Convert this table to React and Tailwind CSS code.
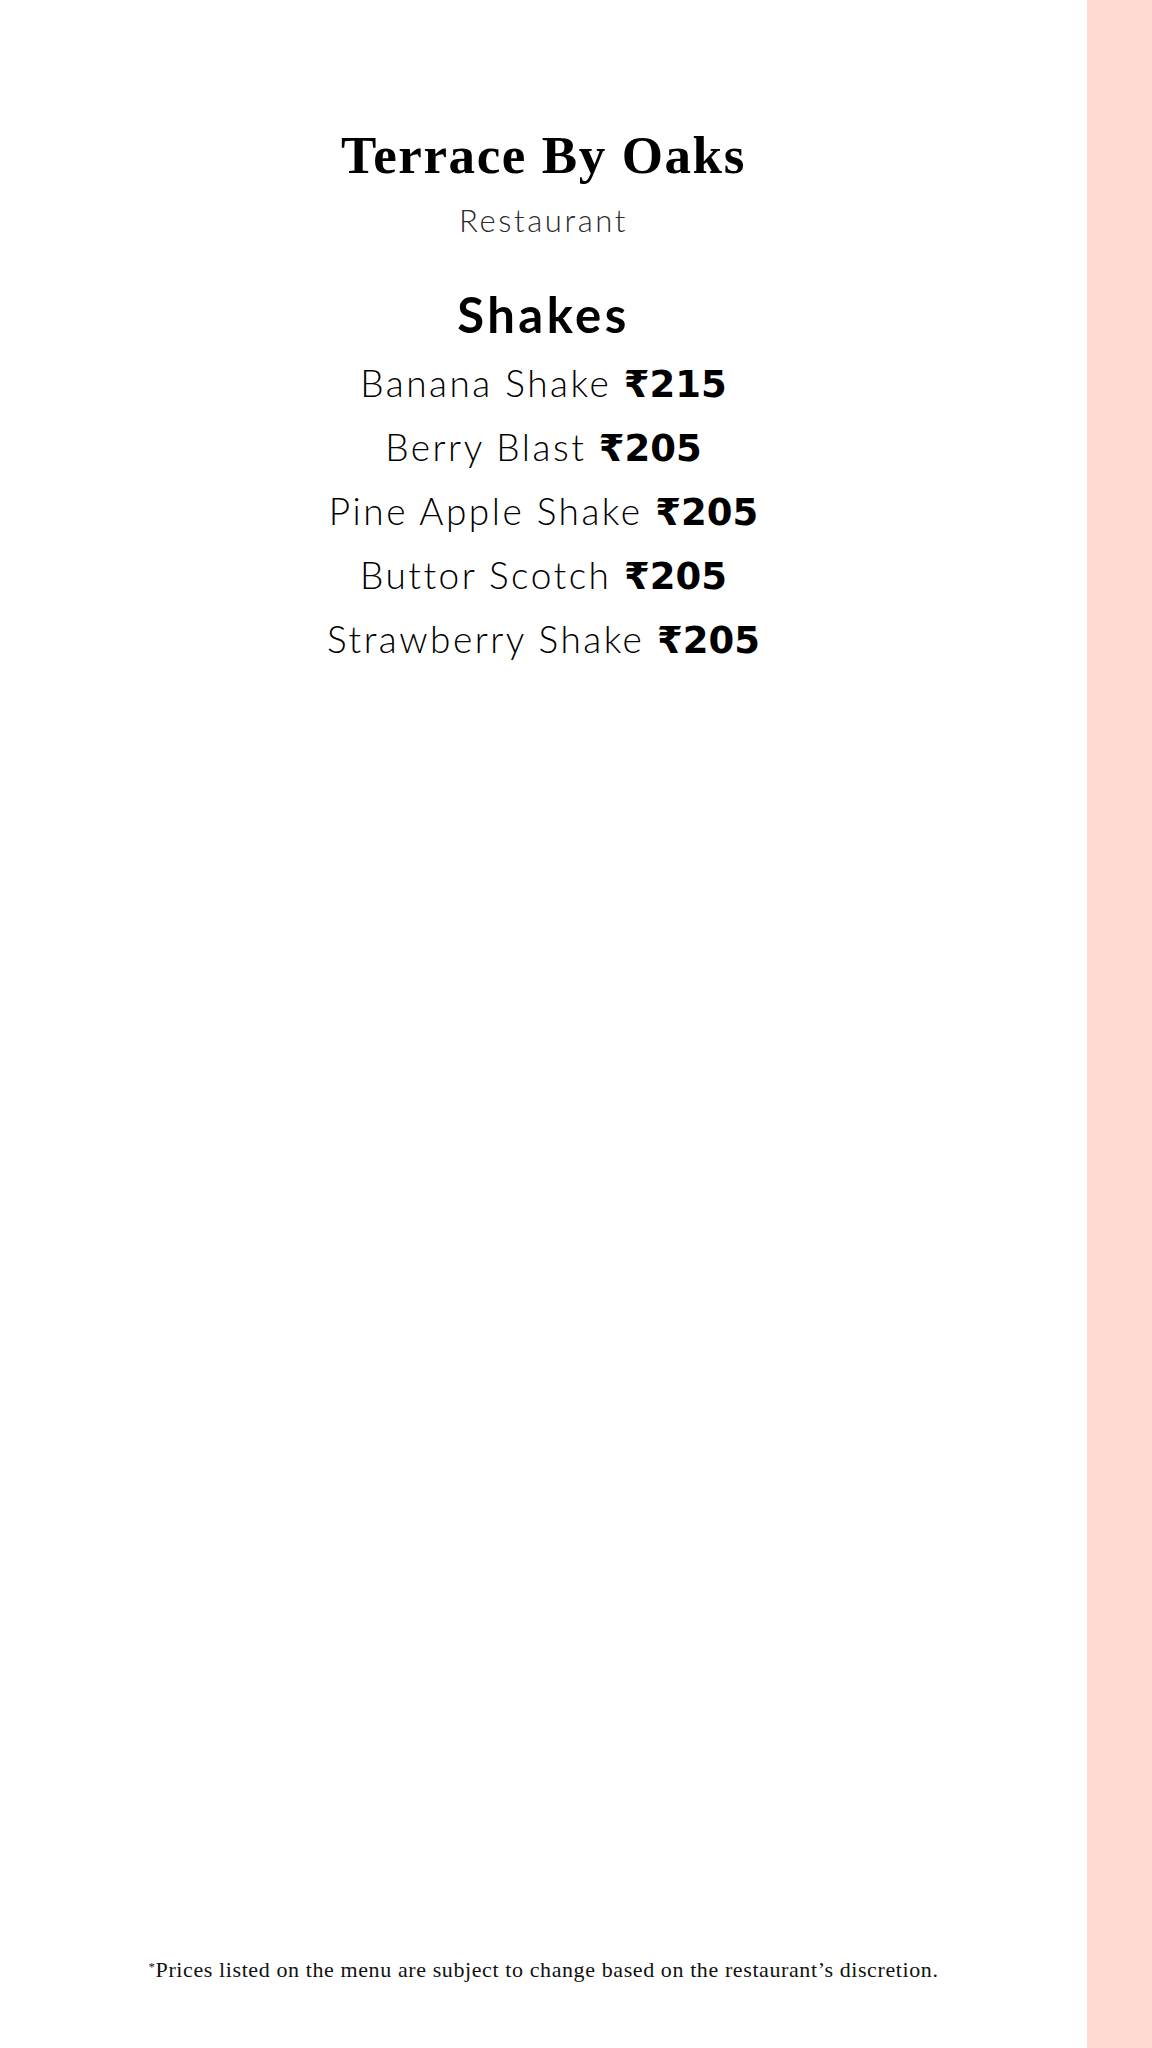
import React from 'react';

const items = [
  { name: 'Banana Shake', price: '215' },
  { name: 'Berry Blast', price: '205' },
  { name: 'Pine Apple Shake', price: '205' },
  { name: 'Buttor Scotch', price: '205' },
  { name: 'Strawberry Shake', price: '205' },
];

export default function App() {
  return (
    <div className="flex min-h-[2048px] w-full bg-white">
      <main className="flex flex-1 flex-col items-center">
        <h1 className="mt-[123px] font-['Liberation_Serif',serif] text-[53px] font-bold leading-[64px] tracking-[1.6px] text-black">
          Terrace By Oaks
        </h1>
        <p className="mt-[13px] font-['Lato',sans-serif] text-[31px] font-light leading-[40px] tracking-[2.6px] text-[#2a2a2a]">
          Restaurant
        </p>
        <h2 className="mt-[46px] font-['Lato',sans-serif] text-[49px] font-bold leading-[56px] tracking-[3.5px] text-black">
          Shakes
        </h2>
        <ul className="mt-[9px] flex flex-col items-center">
          {items.map((item) => (
            <li
              key={item.name}
              className="h-[64px] font-['Lato',sans-serif] text-[37px] font-light leading-[64px] tracking-[2.5px] text-black"
            >
              {item.name}{' '}
              <span className="font-['DejaVu_Sans',sans-serif] text-[37px] font-bold leading-none tracking-normal">
                ₹{item.price}
              </span>
            </li>
          ))}
        </ul>
        <p className="mt-auto mb-[64px] font-['Liberation_Serif',serif] text-[22px] leading-[28px] tracking-[0.6px] text-[#111]">
          <sup className="text-[13px]">*</sup>Prices listed on the menu are subject to change based on the restaurant’s discretion.
        </p>
      </main>
      <aside className="w-[65px] shrink-0 bg-[#ffdad2]" />
    </div>
  );
}
